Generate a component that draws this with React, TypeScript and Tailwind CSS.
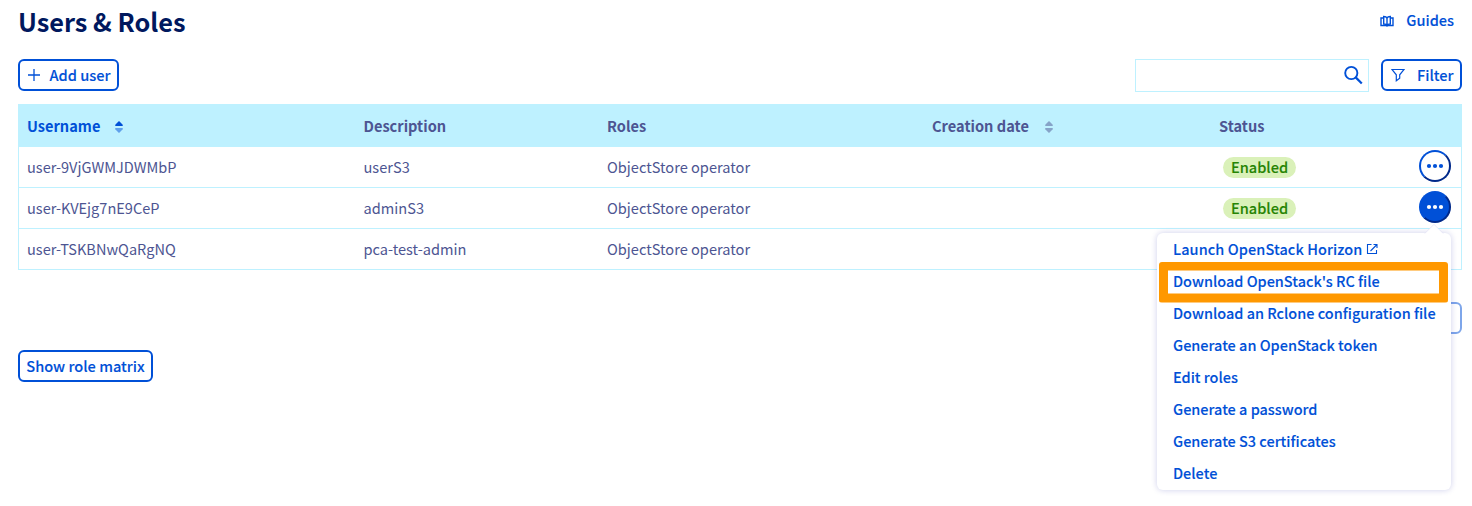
import type { ReactNode } from "react";

const columns = "grid grid-cols-[336.5px_243.5px_325px_287px_1fr] items-center pl-2";

const users = [
  { name: "user-9VjGWMJDWMbP", description: "userS3", role: "ObjectStore operator", status: "Enabled" },
  { name: "user-KVEjg7nE9CeP", description: "adminS3", role: "ObjectStore operator", status: "Enabled", open: true },
  { name: "user-TSKBNwQaRgNQ", description: "pca-test-admin", role: "ObjectStore operator" },
];

function OutlineButton({ children, className }: { children: ReactNode; className: string }) {
  return (
    <button
      className={`flex h-8 items-center rounded-md border-2 border-[#0050d7] bg-white font-medium whitespace-nowrap text-[#0050d7] [-webkit-text-stroke:0.1px] ${className}`}
    >
      {children}
    </button>
  );
}

function SortIcon({ active = false }: { active?: boolean }) {
  return (
    <svg width="8" height="12" viewBox="0 0 8 12" className={active ? "mt-0.5 text-[#0050d7]" : "mt-0.5 text-[#4d5592]/50"}>
      <path d="M3.4.4a.9.9 0 0 1 1.2 0L7.7 3.8c.4.5.2 1.2-.5 1.2H.8C.1 5-.1 4.3.3 3.8z" fill="currentColor" />
      <path
        d="M3.4 11.6a.9.9 0 0 0 1.2 0L7.7 8.2c.4-.5.2-1.2-.5-1.2H.8c-.7 0-.9.7-.5 1.2z"
        fill="currentColor"
        opacity={active ? 0.5 : 1}
      />
    </svg>
  );
}

function Dots() {
  return (
    <svg width="18" height="6" viewBox="0 0 18 6" fill="currentColor">
      <circle cx="3" cy="3" r="2.1" />
      <circle cx="9" cy="3" r="2.1" />
      <circle cx="15" cy="3" r="2.1" />
    </svg>
  );
}

function MenuItem({ children }: { children: ReactNode }) {
  return <li className="flex h-8 items-center pl-4 whitespace-nowrap">{children}</li>;
}

function ActionsMenu() {
  return (
    <div className="absolute top-[42px] right-0 z-10 h-[257px] w-[294px] rounded-md bg-white text-[14.47px] text-[#0050d7] shadow-[0_0_6px_rgba(0,14,156,0.2)]">
      <svg width="20" height="10" viewBox="0 0 20 10" className="absolute -top-[9px] right-[7px]">
        <path d="M1 9.5 10 .5l9 9" fill="#fff" stroke="#e3e2f5" strokeWidth="1" />
        <path d="M1 10 10 1l9 9z" fill="#fff" />
      </svg>
      <ul className="font-medium [-webkit-text-stroke:0.1px]">
        <MenuItem>
          <span className="tracking-[0.1px]">Launch OpenStack Horizon</span>
          <svg width="12" height="12" viewBox="0 0 12 12" fill="none" stroke="currentColor" className="ml-[3.5px]">
            <path d="M5.5 1.5H1.500v9h9V7M7.500 1.500h3.500V5M11 1.500 4.500 8" strokeWidth="1.1" />
          </svg>
        </MenuItem>
        <MenuItem>Download OpenStack's RC file</MenuItem>
        <MenuItem>Download an Rclone configuration file</MenuItem>
        <MenuItem>Generate an OpenStack token</MenuItem>
        <MenuItem>Edit roles</MenuItem>
        <MenuItem>Generate a password</MenuItem>
        <MenuItem>Generate S3 certificates</MenuItem>
        <MenuItem>Delete</MenuItem>
      </ul>
      <div className="absolute top-[29px] left-[2px] h-[41px] w-[289px] rounded-[3px] bg-[#ff9800] [clip-path:polygon(evenodd,0_0,100%_0,100%_100%,0_100%,0_0,9px_9px,280px_9px,280px_32px,9px_32px,9px_9px)]" />
    </div>
  );
}

export default function App() {
  return (
    <main className="h-[506px] w-[1472px] overflow-hidden bg-white pr-2.5 pl-[18px] font-['Noto_Sans_CJK_SC',sans-serif] text-[14.6px] leading-5 text-[#4d5592]">
      <header className="flex h-[46px] justify-between">
        <h1 className="text-[25.3px] leading-[42px] font-bold text-[#00185e]">Users &amp; Roles</h1>
        <a className="flex h-10 items-center pr-2 text-[14.5px] font-medium text-[#0050d7] [-webkit-text-stroke:0.1px]">
          <svg width="14" height="12" viewBox="0 0 14 12" fill="none" stroke="currentColor" strokeWidth="1.4" className="mt-px mr-3">
            <path d="M3 3H1v7.500h12V3h-2" />
            <path d="M3.700 9V1.500C5.500 1.500 6.600 2 7 3.300c.4-1.300 1.500-1.800 3.300-1.800V9C8.500 9 7.400 9.300 7 10.500 6.600 9.300 5.500 9 3.700 9zM7 3v7.500" />
          </svg>
          Guides
        </a>
      </header>

      <div className="mt-[13px] flex h-[45px] items-start justify-between">
        <OutlineButton className="w-[101px] pl-2">
          <svg width="12" height="12" viewBox="0 0 12 12" stroke="currentColor" className="mr-[9.500px]">
            <path d="M6 0v12M0 6h12" strokeWidth="1.3" />
          </svg>
          Add user
        </OutlineButton>
        <div className="flex gap-3">
          <div className="flex h-[33px] w-[234px] items-start justify-end border border-[#bef1ff] pt-[5px] pr-[5px]">
            <svg width="20" height="20" viewBox="0 0 20 20" fill="none" stroke="currentColor" className="text-[#0050d7]">
              <circle cx="8.3" cy="8" r="6.1" strokeWidth="1.9" />
              <path d="m12.700 12.400 6.100 6.100" strokeWidth="2.2" />
            </svg>
          </div>
          <OutlineButton className="w-[81px] pl-2">
            <svg width="14" height="14" viewBox="0 0 14 14" fill="none" stroke="currentColor" strokeWidth="1.2" className="mr-3">
              <path d="M.9 1.500h12.200L8.700 6.800v3.400l-3.400 2.600v-6z" />
            </svg>
            Filter
          </OutlineButton>
        </div>
      </div>

      <section className="w-[1444px]">
        <div className={`${columns} h-[43px] border-x border-[#bef1ff] bg-[#bef1ff] pt-px font-bold`}>
          <div className="flex items-center gap-[15px] text-[#0050d7]">
            Username <SortIcon active />
          </div>
          <div>Description</div>
          <div>Roles</div>
          <div className="flex items-center gap-4">
            Creation date <SortIcon />
          </div>
          <div>Status</div>
        </div>
        {users.map((user) => (
          <div key={user.name} className={`${columns} h-[41px] border-x border-b border-[#bef1ff]`}>
            <div className="text-[14.55px]">{user.name}</div>
            <div>{user.description}</div>
            <div>{user.role}</div>
            <div />
            {user.status && (
              <div className="flex items-center justify-between pr-2.5 pl-1">
                <span className="flex h-[21px] w-[73px] items-center justify-center rounded-full bg-[#daf1b9] font-medium text-[#268403] [-webkit-text-stroke:0.1px]">
                  {user.status}
                </span>
                <div className="relative mb-[3px]">
                  <button
                    className={`flex size-8 items-center justify-center rounded-full border-2 border-[#0050d7] border-r-[#00298a] border-b-[#00298a] ${
                      user.open ? "bg-[#0050d7] text-white" : "bg-white text-[#0050d7]"
                    }`}
                  >
                    <Dots />
                  </button>
                  {user.open && <ActionsMenu />}
                </div>
              </div>
            )}
          </div>
        ))}
      </section>

      <div className="mt-8 flex justify-end">
        <OutlineButton className="w-24 opacity-50">{null}</OutlineButton>
      </div>
      <OutlineButton className="mt-4 w-[135px] justify-center">Show role matrix</OutlineButton>
    </main>
  );
}
